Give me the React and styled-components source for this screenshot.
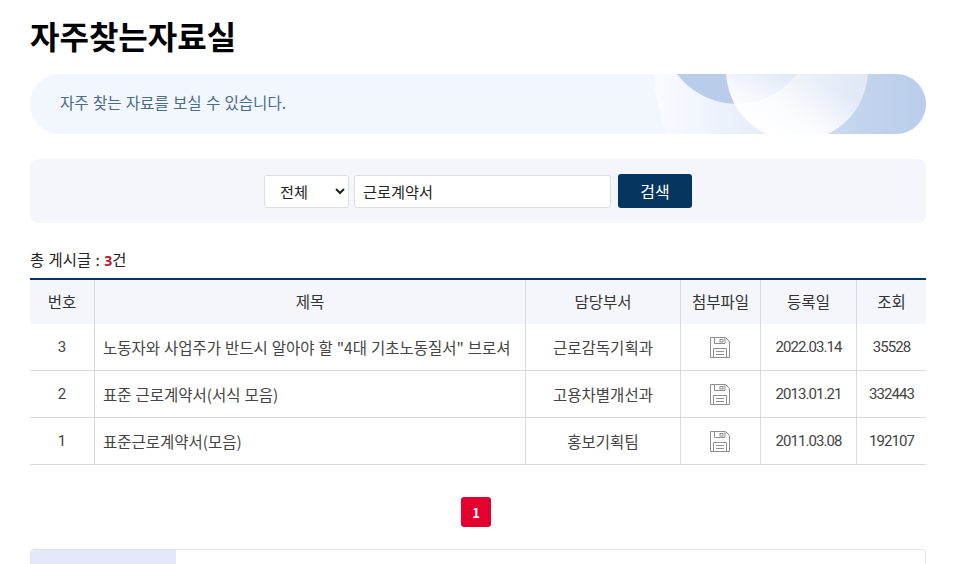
import React from "react";
import styled, { createGlobalStyle } from "styled-components";

const Global = createGlobalStyle`
  html, body { margin: 0; padding: 0; background: #fff; height: 564px; overflow: hidden; }
  body { font-family: "Noto Sans CJK KR", sans-serif; color: #333; }
  * { box-sizing: border-box; }
`;
const Page = styled.main`
  width: 896px;
  margin-left: 30px;
  padding-top: 13px;
`;
const Title = styled.h1`
  margin: 0;
  font-size: 32px;
  line-height: 44px;
  font-weight: 700;
  color: #000;
`;
const Hero = styled.section`
  position: relative;
  margin-top: 17px;
  height: 60px;
  border-radius: 30px;
  background: #f2f6fd;
  overflow: hidden;
  display: flex;
  align-items: center;
  padding: 0 0 4px 30px;
`;
const HeroArt = styled.svg`
  position: absolute;
  left: 0;
  top: 0;
  width: 896px;
  height: 60px;
`;
const HeroText = styled.p`
  position: relative;
  margin: 0;
  font-size: 15.6px;
  word-spacing: 0.7px;
  color: #4b6b8c;
`;
const SearchBar = styled.form`
  margin-top: 25px;
  height: 64px;
  border-radius: 8px;
  background: #f4f6fb;
  display: flex;
  align-items: center;
  justify-content: center;
  gap: 5px;
`;
const Select = styled.select`
  width: 85px;
  height: 33px;
  padding: 0 8px 0 11px;
  border: 1px solid #dcdfe6;
  border-radius: 3px;
  background: #fff;
  color: #222;
  font: 15.2px "Noto Sans CJK KR", sans-serif;
`;
const Input = styled.input`
  width: 257px;
  height: 33px;
  padding: 0 8px;
  border: 1px solid #dcdfe6;
  border-radius: 3px;
  background: #fff;
  color: #222;
  font: 15.2px "Noto Sans CJK KR", sans-serif;
`;
const Button = styled.button`
  width: 74px;
  height: 34px;
  margin-left: 2px;
  border: 0;
  border-radius: 3px;
  background: #06365f;
  color: #fff;
  font: 16px "Noto Sans CJK KR", sans-serif;
`;
const Count = styled.p`
  margin: 25px 0 0;
  height: 30px;
  font-size: 15.4px;
  word-spacing: 1px;
  line-height: 22px;
  color: #222;
  b { color: #b8142f; font-weight: 700; font-size: 14px; font-family: "Noto Sans", sans-serif; }
`;
const Table = styled.table`
  width: 896px;
  table-layout: fixed;
  border-collapse: separate;
  border-spacing: 0;
  border-top: 2px solid #06365f;
  font-size: 15.5px;
`;
const Th = styled.th`
  height: 44px;
  padding: 0 0 2px;
  background: #f4f6fb;
  font-weight: 400;
  color: #333;
  border-left: 1px solid #d8dade;
  &:first-child { border-left: 0; }
`;
const Td = styled.td`
  height: 47px;
  padding: 0 ${p => (p.$icon ? "9px" : "8px")} 0 8px;
  text-align: ${p => (p.$left ? "left" : "center")};
  color: #444;
  border-left: 1px solid #d8dade;
  border-bottom: 1px solid #d8dade;
  white-space: nowrap;
  word-spacing: 0.5px;
  font-family: ${p => (p.$num ? "Roboto, sans-serif" : "inherit")};
  font-size: ${p => (p.$num ? "15px" : "inherit")};
  letter-spacing: ${p => (p.$num ? "-0.95px" : "normal")};
  &:first-child { border-left: 0; padding-right: 9px; }
`;
const FileIcon = styled.svg`
  display: block;
  margin: 1px auto 0;
  width: 20px;
  height: 21px;
`;
const Pager = styled.nav`
  margin-top: 32px;
  padding-right: 4px;
  display: flex;
  justify-content: center;
`;
const PageNo = styled.a`
  width: 30px;
  height: 30px;
  border-radius: 3px;
  background: #e4002f;
  color: #fff;
  font-size: 13px;
  font-weight: 700;
  display: flex;
  align-items: center;
  justify-content: center;
`;
const TabBox = styled.div`
  margin-top: 22px;
  height: 60px;
  border: 1px solid #e2e3e8;
  border-radius: 4px;
  overflow: hidden;
`;
const Tab = styled.div`
  width: 145px;
  height: 100%;
  background: #e3e9fb;
`;

const Floppy = () => (
  <FileIcon viewBox="0 0 20 21" fill="none" stroke="#8e8e8e" strokeWidth="1">
    <path d="M0.5 0.5H15.5L19.5 4.5V20.5H0.5Z" />
    <path d="M4.5 0.5V6.5H15V0.5" />
    <rect x="10" y="2.5" width="3" height="2.5" />
    <path d="M3.5 20.5V11.5H16.5V20.5" />
    <path d="M6 14.5H14M6 17.5H14" />
  </FileIcon>
);

const rows = [
  ["3", '노동자와 사업주가 반드시 알아야 할 "4대 기초노동질서" 브로셔', "근로감독기획과", "2022.03.14", "35528"],
  ["2", "표준 근로계약서(서식 모음)", "고용차별개선과", "2013.01.21", "332443"],
  ["1", "표준근로계약서(모음)", "홍보기획팀", "2011.03.08", "192107"],
];

export default function App() {
  return (
    <Page>
      <Global />
      <Title>자주찾는자료실</Title>
      <Hero>
        <HeroArt viewBox="0 0 896 60">
          <defs>
            <linearGradient id="big" x1="623" x2="896" y1="0" y2="0" gradientUnits="userSpaceOnUse">
              <stop offset="0" stopColor="#f9fbff" />
              <stop offset="0.4" stopColor="#e6edf8" />
              <stop offset="0.75" stopColor="#c3d4ed" />
              <stop offset="1" stopColor="#b9cdea" />
            </linearGradient>
            <linearGradient id="soft" x1="745" y1="60" x2="775" y2="0" gradientUnits="userSpaceOnUse">
              <stop offset="0" stopColor="#fff" stopOpacity="1" />
              <stop offset="0.4" stopColor="#fff" stopOpacity="0.85" />
              <stop offset="1" stopColor="#fff" stopOpacity="0.5" />
            </linearGradient>
          </defs>
          <circle cx="823" cy="-14" r="200" fill="url(#big)" />
          <circle cx="707" cy="-45" r="75" fill="#b9cdea" />
          <circle cx="767" cy="-4" r="71" fill="url(#soft)" />
        </HeroArt>
        <HeroText>자주 찾는 자료를 보실 수 있습니다.</HeroText>
      </Hero>
      <SearchBar>
        <Select defaultValue="전체"><option>전체</option></Select>
        <Input readOnly value="근로계약서" />
        <Button type="button">검색</Button>
      </SearchBar>
      <Count>총 게시글 : <b>3</b>건</Count>
      <Table>
        <colgroup>
          <col style={{ width: 64 }} />
          <col style={{ width: 431 }} />
          <col style={{ width: 155 }} />
          <col style={{ width: 80 }} />
          <col style={{ width: 96 }} />
          <col style={{ width: 70 }} />
        </colgroup>
        <thead>
          <tr>
            <Th>번호</Th><Th>제목</Th><Th>담당부서</Th><Th>첨부파일</Th><Th>등록일</Th><Th>조회</Th>
          </tr>
        </thead>
        <tbody>
          {rows.map(r => (
            <tr key={r[0]}>
              <Td $num>{r[0]}</Td>
              <Td $left>{r[1]}</Td>
              <Td>{r[2]}</Td>
              <Td $icon><Floppy /></Td>
              <Td $num>{r[3]}</Td>
              <Td $num>{r[4]}</Td>
            </tr>
          ))}
        </tbody>
      </Table>
      <Pager><PageNo>1</PageNo></Pager>
      <TabBox><Tab /></TabBox>
    </Page>
  );
}
